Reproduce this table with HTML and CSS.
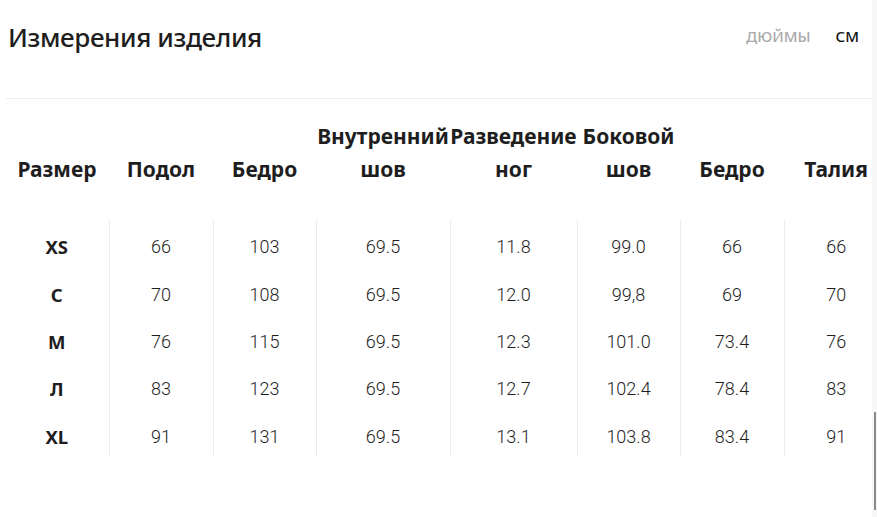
FILE: index.html
```html
<!DOCTYPE html>
<html lang="ru">
<head>
<meta charset="utf-8">
<title>Измерения изделия</title>
<link rel="stylesheet" href="styles.css">
</head>
<body>
<div class="page">
  <div class="main">
    <div class="head">
      <h1 class="title">Измерения изделия</h1>
      <div class="units">
        <span class="unit unit-off">ДЮЙМЫ</span>
        <span class="unit unit-on">СМ</span>
      </div>
    </div>
    <div class="rule"></div>
    <table class="sizes">
      <colgroup>
        <col class="c-std"><col class="c-std"><col class="c-std3"><col class="c-wide"><col class="c-wide2"><col class="c-std3"><col class="c-std"><col class="c-std">
      </colgroup>
      <thead>
        <tr>
          <th>Размер</th>
          <th>Подол</th>
          <th>Бедро</th>
          <th>Внутренний шов</th>
          <th>Разведение ног</th>
          <th>Боковой шов</th>
          <th>Бедро</th>
          <th>Талия</th>
        </tr>
      </thead>
      <tbody>
        <tr><td class="sz">XS</td><td>66</td><td>103</td><td>69.5</td><td>11.8</td><td>99.0</td><td>66</td><td>66</td></tr>
        <tr><td class="sz">С</td><td>70</td><td>108</td><td>69.5</td><td>12.0</td><td>99,8</td><td>69</td><td>70</td></tr>
        <tr><td class="sz">M</td><td>76</td><td>115</td><td>69.5</td><td>12.3</td><td>101.0</td><td>73.4</td><td>76</td></tr>
        <tr><td class="sz">Л</td><td>83</td><td>123</td><td>69.5</td><td>12.7</td><td>102.4</td><td>78.4</td><td>83</td></tr>
        <tr><td class="sz">XL</td><td>91</td><td>131</td><td>69.5</td><td>13.1</td><td>103.8</td><td>83.4</td><td>91</td></tr>
      </tbody>
    </table>
  </div>
  <div class="rail"><div class="thumb"></div></div>
</div>
</body>
</html>
```

FILE: styles.css
```css
html, body {
  margin: 0;
  padding: 0;
  background: #fff;
}
body {
  font-family: "Noto Sans", "Open Sans", sans-serif;
  color: #222;
  width: 877px;
  height: 517px;
  overflow: hidden;
}
.page {
  display: flex;
  height: 517px;
}
.main {
  width: 872px;
  overflow: hidden;
}
.rail {
  position: relative;
  width: 5px;
  background: #f7f7f7;
}
.thumb {
  position: absolute;
  left: 2px;
  top: 412px;
  width: 2px;
  height: 98px;
  background: #8a8a8a;
}
.head {
  display: flex;
  align-items: center;
  justify-content: space-between;
  height: 74px;
  padding: 0 13px 0 8px;
}
.title {
  margin: 0;
  font-size: 26px;
  font-weight: 500;
  letter-spacing: -0.4px;
  color: #1e1e1e;
}
.units {
  display: flex;
  gap: 25px;
  font-size: 15px;
  font-weight: 500;
  padding-bottom: 2px;
}
.unit-off { color: #aaa; }
.unit-on { color: #111; }
.rule {
  margin: 24px 0 0 6px;
  height: 1px;
  background: #ececec;
}
.sizes {
  margin-left: 5px;
  table-layout: fixed;
  width: 883px;
  border-collapse: collapse;
}
.c-std { width: 104px; }
.c-std3 { width: 103px; }
.c-wide { width: 134px; }
.c-wide2 { width: 127px; }
.sizes th {
  padding: 21px 0 34px;
  font-size: 21px;
  font-weight: 700;
  line-height: 33px;
  text-align: center;
  vertical-align: bottom;
  color: #1e1e1e;
  white-space: normal;
}
.sizes td {
  height: 41.4px;
  padding: 6px 0 0;
  text-align: center;
  vertical-align: middle;
  font-family: Roboto, "Noto Sans", sans-serif;
  font-weight: 300;
  font-size: 18px;
  color: #1e1e1e;
  border-left: 1px solid #ececec;
}
.sizes td.sz {
  border-left: none;
  font-family: "Noto Sans", sans-serif;
  font-weight: 700;
  font-size: 18.5px;
}
```
